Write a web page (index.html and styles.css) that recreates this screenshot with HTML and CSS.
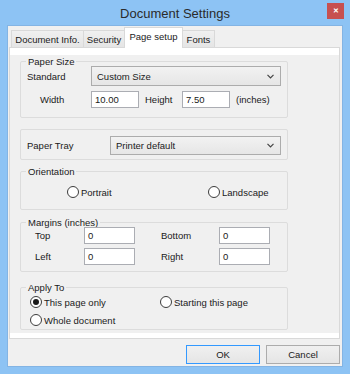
FILE: index.html
```html
<!DOCTYPE html>
<html lang="en">

<head>
    <meta charset="UTF-8">
    <title>Document Settings</title>
    <link rel="stylesheet" href="styles.css">
</head>

<body>
    <div class="window">
        <div class="titlebar">
            <span></span>
            <span class="title">Document Settings</span>
            <span class="close-btn">&#x2715;</span>
        </div>

        <div class="client">
            <div class="tabs">
                <div class="tab tab-info">Document Info.</div>
                <div class="tab tab-security">Security</div>
                <div class="tab tab-page active">Page setup</div>
                <div class="tab tab-fonts">Fonts</div>
            </div>

            <div class="tab-panel">
                <div class="page">
                    <fieldset class="group group-size">
                        <legend>Paper Size</legend>
                        <div class="row">
                            <span class="lbl lbl-standard">Standard</span>
                            <div class="select select-size">
                                <span>Custom Size</span>
                                <svg width="7" height="5" viewBox="0 0 7 5"><polyline points="0.5,0.8 3.5,3.8 6.5,0.8" fill="none" stroke="#444" stroke-width="1.2"/></svg>
                            </div>
                        </div>
                        <div class="row row-dims">
                            <span class="lbl lbl-width">Width</span>
                            <div class="textbox tb-dim">10.00</div>
                            <span class="lbl lbl-height">Height</span>
                            <div class="textbox tb-dim">7.50</div>
                            <span class="lbl lbl-unit">(inches)</span>
                        </div>
                    </fieldset>

                    <fieldset class="group group-tray">
                        <div class="row">
                            <span class="lbl lbl-tray">Paper Tray</span>
                            <div class="select select-tray">
                                <span>Printer default</span>
                                <svg width="7" height="5" viewBox="0 0 7 5"><polyline points="0.5,0.8 3.5,3.8 6.5,0.8" fill="none" stroke="#444" stroke-width="1.2"/></svg>
                            </div>
                        </div>
                    </fieldset>

                    <fieldset class="group group-orient">
                        <legend>Orientation</legend>
                        <div class="row row-orient">
                            <label class="radio radio-portrait"><span class="dot"></span>Portrait</label>
                            <label class="radio radio-landscape"><span class="dot"></span>Landscape</label>
                        </div>
                    </fieldset>

                    <fieldset class="group group-margins">
                        <legend>Margins (inches)</legend>
                        <div class="row">
                            <span class="lbl lbl-m">Top</span>
                            <div class="textbox tb-m">0</div>
                            <span class="lbl lbl-m2">Bottom</span>
                            <div class="textbox tb-m">0</div>
                        </div>
                        <div class="row row-m2">
                            <span class="lbl lbl-m">Left</span>
                            <div class="textbox tb-m">0</div>
                            <span class="lbl lbl-m2">Right</span>
                            <div class="textbox tb-m">0</div>
                        </div>
                    </fieldset>

                    <fieldset class="group group-apply">
                        <legend>Apply To</legend>
                        <div class="row">
                            <label class="radio radio-this"><span class="dot checked"></span>This page only</label>
                            <label class="radio"><span class="dot"></span>Starting this page</label>
                        </div>
                        <div class="row row-whole">
                            <label class="radio"><span class="dot"></span>Whole document</label>
                        </div>
                    </fieldset>
                </div>
            </div>

            <div class="buttons">
                <div class="btn btn-default">OK</div>
                <div class="btn">Cancel</div>
            </div>
        </div>
    </div>
</body>

</html>
```

FILE: styles.css
```css
body {
    margin: 0;
    font-family: "Liberation Sans", Arial, sans-serif;
    font-size: 9.5px;
    color: #1a1a1a;
}

.window {
    width: 350px;
    height: 374px;
    box-sizing: border-box;
    background-color: #8dc3f4;
    padding: 0 7px 7px 7px;
    display: flex;
    flex-direction: column;
}

.titlebar {
    height: 25px;
    display: grid;
    grid-template-columns: 1fr auto 1fr;
    align-items: center;
}

.title {
    font-size: 13px;
    color: #2b2b2b;
    padding-top: 2px;
}

.close-btn {
    justify-self: end;
    width: 17px;
    height: 16px;
    margin-right: -1px;
    margin-top: -3px;
    background-color: #c75050;
    color: #fff;
    font-size: 7px;
    font-weight: bold;
    display: flex;
    align-items: center;
    justify-content: center;
}

.client {
    flex: 1;
    background-color: #f0f0f0;
    padding-top: 2px;
    box-shadow: inset 0 0 0 1px #83b4e4;
}

.tabs {
    display: flex;
    align-items: flex-end;
    height: 20px;
    padding-left: 4px;
}

.tab {
    height: 17px;
    box-sizing: border-box;
    border: 1px solid #d9d9d9;
    border-bottom: none;
    background: linear-gradient(#f0f0f0, #e5e5e5);
    display: flex;
    align-items: center;
    justify-content: center;
    margin-left: -1px;
}

.tab-info {
    width: 73px;
    margin-left: 0;
}

.tab-security {
    width: 42px;
}

.tab-page {
    width: 59px;
}

.tab-fonts {
    width: 33px;
}

.tab.active {
    height: 21px;
    background: #fff;
    margin-bottom: -1px;
    position: relative;
    padding-bottom: 3px;
}

.tab-panel {
    margin-left: 2px;
    width: 331px;
    height: 292px;
    box-sizing: border-box;
    border: 1px solid #d9d9d9;
    background-color: #fff;
    padding-top: 7px;
}

.page {
    background-color: #f0f0f0;
    height: 278px;
    padding-top: 1px;
    box-sizing: border-box;
}

.group {
    margin: 0 0 0 10px;
    width: 268px;
    box-sizing: border-box;
    border: 1px solid #dcdcdc;
    border-radius: 2px;
    padding: 0 0 0 6px;
    min-width: 0;
}

.group legend {
    line-height: 11px;
    padding: 0 2px;
    margin-left: -1px;
    color: #1a1a1a;
}

.row {
    display: flex;
    align-items: center;
}

.lbl {
    flex: none;
}

.select {
    height: 20px;
    box-sizing: border-box;
    border: 1px solid #acacac;
    background: linear-gradient(#f2f2f2, #e6e6e6);
    display: flex;
    align-items: center;
    justify-content: space-between;
    padding: 0 6px 0 5px;
}

.textbox {
    height: 17px;
    box-sizing: border-box;
    border: 1px solid #abadb3;
    background-color: #fff;
    padding: 0 3px;
    display: flex;
    align-items: center;
}

/* Paper Size */
.group-size {
    padding-bottom: 9px;
}

.group-size .row:first-of-type {
    margin-top: -1px;
}

.lbl-standard {
    width: 64px;
}

.select-size {
    width: 190px;
}

.row-dims {
    margin-top: 5px;
}

.lbl-width {
    width: 51px;
    padding-left: 13px;
}

.tb-dim {
    width: 48px;
}

.lbl-height {
    width: 43px;
    padding-left: 6px;
    box-sizing: border-box;
}

.lbl-unit {
    padding-left: 6px;
}

/* Paper Tray */
.group-tray {
    margin-top: 11px;
    padding-top: 6px;
    padding-bottom: 4px;
}

.lbl-tray {
    width: 83px;
}

.select-tray {
    width: 171px;
    height: 19px;
}

/* Orientation */
.group-orient {
    margin-top: 6px;
    padding-top: 8px;
    padding-bottom: 10px;
}

.row-orient {
    height: 14px;
}

.radio {
    display: flex;
    align-items: center;
    gap: 2px;
}

.dot {
    width: 12px;
    height: 12px;
    box-sizing: border-box;
    border: 1px solid #3c3c3c;
    border-radius: 50%;
    background-color: #fff;
    display: flex;
    align-items: center;
    justify-content: center;
}

.dot.checked::after {
    content: "";
    width: 6px;
    height: 6px;
    border-radius: 50%;
    background-color: #1a1a1a;
}

.radio-portrait {
    margin-left: 40px;
    width: 141px;
}

/* Margins */
.group-margins {
    margin-top: 7px;
    padding-bottom: 6px;
}

.group-margins .row:first-of-type {
    margin-top: -1px;
}

.lbl-m {
    width: 57px;
    padding-left: 8px;
    box-sizing: border-box;
}

.tb-m {
    width: 51px;
}

.lbl-m2 {
    width: 84px;
    padding-left: 26px;
    box-sizing: border-box;
}

.row-m2 {
    margin-top: 4px;
}

/* Apply To */
.group-apply {
    margin-top: 10px;
    padding-top: 2px;
    padding-bottom: 2px;
    padding-left: 9px;
}

.group-apply legend {
    margin-left: -4px;
}

.group-apply .row {
    height: 14px;
}

.radio-this {
    width: 130px;
}

.row-whole {
    margin-top: 4px;
}

/* Buttons */
.buttons {
    display: flex;
    justify-content: flex-end;
    gap: 6px;
    padding: 6px 3px 0 0;
}

.btn {
    width: 74px;
    height: 19px;
    box-sizing: border-box;
    border: 1px solid #acacac;
    background: linear-gradient(#f0f0f0, #e5e5e5);
    display: flex;
    align-items: center;
    justify-content: center;
}

.btn-default {
    border-color: #3399ff;
}
```
